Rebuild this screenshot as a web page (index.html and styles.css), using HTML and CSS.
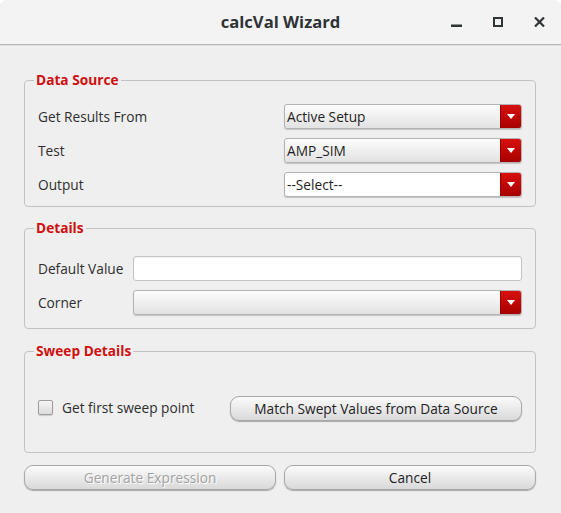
FILE: index.html
```html
<!DOCTYPE html>
<html>
<head>
<meta charset="utf-8">
<title>calcVal Wizard</title>
<link rel="stylesheet" href="styles.css">
</head>
<body>
<div class="window">
  <header class="titlebar">
    <div class="spacer"></div>
    <div class="title">calcVal Wizard</div>
    <div class="controls">
      <svg class="ctl" width="11" height="10" viewBox="0 0 11 10"><rect x="0" y="7.5" width="11" height="2.5" fill="#2e3436"/></svg>
      <svg class="ctl" width="10" height="10" viewBox="0 0 10 10"><rect x="1" y="1" width="8" height="8" fill="none" stroke="#2e3436" stroke-width="2"/></svg>
      <svg class="ctl" width="11" height="10" viewBox="0 0 11 10"><path d="M1 0.5 L10 9.5 M10 0.5 L1 9.5" stroke="#2e3436" stroke-width="2.2" fill="none"/></svg>
    </div>
  </header>

  <main class="content">
    <fieldset class="group">
      <legend>Data Source</legend>
      <div class="form form-ds">
        <span class="label">Get Results From</span>
        <div class="combo"><span class="combo-text">Active Setup</span><span class="arrow"><svg width="8" height="5" viewBox="0 0 8 5"><path d="M0 0 H8 L4 5 Z" fill="#fff"/></svg></span></div>
        <span class="label">Test</span>
        <div class="combo"><span class="combo-text">AMP_SIM</span><span class="arrow"><svg width="8" height="5" viewBox="0 0 8 5"><path d="M0 0 H8 L4 5 Z" fill="#fff"/></svg></span></div>
        <span class="label">Output</span>
        <div class="combo combo-edit"><span class="combo-text">--Select--</span><span class="arrow"><svg width="8" height="5" viewBox="0 0 8 5"><path d="M0 0 H8 L4 5 Z" fill="#fff"/></svg></span></div>
      </div>
    </fieldset>

    <fieldset class="group group-details">
      <legend>Details</legend>
      <div class="form form-details">
        <span class="label">Default Value</span>
        <div class="input"></div>
        <span class="label">Corner</span>
        <div class="combo"><span class="combo-text"></span><span class="arrow"><svg width="8" height="5" viewBox="0 0 8 5"><path d="M0 0 H8 L4 5 Z" fill="#fff"/></svg></span></div>
      </div>
    </fieldset>

    <fieldset class="group group-sweep">
      <legend>Sweep Details</legend>
      <div class="sweep-row">
        <label class="check"><span class="box"></span><span>Get first sweep point</span></label>
        <div class="btn">Match Swept Values from Data Source</div>
      </div>
    </fieldset>

    <div class="actions">
      <div class="btn btn-disabled">Generate Expression</div>
      <div class="btn">Cancel</div>
    </div>
  </main>
</div>
</body>
</html>
```

FILE: styles.css
```css
html, body {
  margin: 0;
  padding: 0;
  background: #ffffff;
}

body {
  font-family: "Open Sans", "Noto Sans", sans-serif;
  font-size: 13.7px;
  color: #2e2e2e;
}

.window {
  width: 561px;
  height: 513px;
  background: #efefef;
  border-radius: 7px 7px 0 0;
  overflow: hidden;
  display: flex;
  flex-direction: column;
}

.titlebar {
  height: 44px;
  background: #f3f3f3;
  border-bottom: 1px solid #b4b4b4;
  box-shadow: 0 1px 0 #dedede;
  display: grid;
  grid-template-columns: 1fr auto 1fr;
  align-items: center;
  flex-shrink: 0;
}

.title {
  font-size: 16.6px;
  font-weight: 700;
  color: #2e3436;
  line-height: 20px;
}

.controls {
  justify-self: end;
  display: flex;
  align-items: center;
  gap: 31px;
  padding-right: 16px;
}

.ctl {
  display: block;
}

.content {
  padding: 27px 25px 0 24px;
  display: flex;
  flex-direction: column;
}

.group {
  margin: 0;
  min-width: 0;
  border: 1px solid #c2c2c2;
  border-radius: 4px;
  padding: 16px 13px 9px 13px;
}

.group legend {
  margin-left: -4px;
  padding: 0 2px;
  font-size: 13.7px;
  font-weight: 700;
  line-height: 16px;
  color: #d10f0f;
}

.group-details {
  margin-top: 13px;
  padding-top: 20px;
  padding-bottom: 13px;
}

.group-sweep {
  margin-top: 14px;
  padding-top: 37px;
  padding-bottom: 31px;
}

.form {
  display: grid;
  row-gap: 9px;
  align-items: center;
}

.form-ds {
  grid-template-columns: 246px 1fr;
}

.form-details {
  grid-template-columns: 95px 1fr;
}

.label {
  line-height: 18px;
  color: #2e2e2e;
}

.combo {
  height: 23px;
  border: 1px solid #b3b3b3;
  border-radius: 3px;
  background: linear-gradient(#fdfdfd, #e2e2e2);
  box-shadow: 0 1px 1px rgba(0, 0, 0, 0.18);
  display: flex;
  align-items: stretch;
  overflow: hidden;
}

.combo-edit {
  background: #ffffff;
}

.combo-text {
  flex: 1;
  padding-left: 2px;
  line-height: 23px;
  color: #1e1e1e;
}

.arrow {
  width: 20px;
  background: linear-gradient(#d90f0f, #a80000);
  display: flex;
  align-items: center;
  justify-content: center;
  border-left: 1px solid #9a0000;
}

.arrow svg {
  display: block;
}

.input {
  height: 23px;
  border: 1px solid #c4c4c4;
  border-radius: 3px;
  background: #ffffff;
  box-shadow: inset 0 1px 1px rgba(0, 0, 0, 0.06);
}

.sweep-row {
  display: grid;
  grid-template-columns: 192px 1fr;
  align-items: center;
}

.check {
  display: flex;
  align-items: center;
  gap: 9px;
  margin-top: -2px;
}

.box {
  width: 13px;
  height: 13px;
  border: 1px solid #9c9c9c;
  border-radius: 2px;
  background: linear-gradient(#f4f4f4, #dcdcdc);
  box-shadow: 0 1px 1px rgba(0, 0, 0, 0.15);
}

.btn {
  height: 23px;
  border: 1px solid #a8a8a8;
  border-radius: 9px;
  background: linear-gradient(#fbfbfb, #d9d9d9);
  box-shadow: 0 1px 1px rgba(0, 0, 0, 0.3);
  display: flex;
  align-items: center;
  justify-content: center;
  color: #222222;
  line-height: 18px;
}

.btn-disabled {
  color: #a2a2a2;
  text-shadow: 1px 1px 0 #ffffff;
}

.actions {
  margin-top: 12px;
  display: grid;
  grid-template-columns: 1fr 1fr;
  gap: 8px;
}
```
